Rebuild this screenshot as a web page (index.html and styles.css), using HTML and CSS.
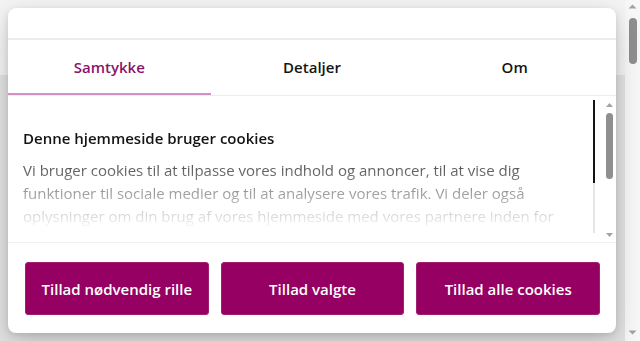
FILE: index.html
```html
<!DOCTYPE html>
<html lang="da">
<head>
<meta charset="utf-8">
<link rel="stylesheet" href="styles.css">
</head>
<body>
<div class="page">
  <div class="band-top"></div>
  <div class="band-rest"></div>
  <div class="dialog">
    <div class="dlg-header"></div>
    <nav class="tabs">
      <div class="tab active">Samtykke</div>
      <div class="tab">Detaljer</div>
      <div class="tab">Om</div>
    </nav>
    <div class="content">
      <div class="text">
        <h2 class="title">Denne hjemmeside bruger cookies</h2>
        <p class="body">Vi bruger cookies til at tilpasse vores indhold og annoncer, til at vise dig funktioner til sociale medier og til at analysere vores trafik. Vi deler også oplysninger om din brug af vores hjemmeside med vores partnere inden for sociale medier, annonceringspartnere og analysepartnere. Vores partnere kan kombinere disse data med andre oplysninger, du har givet dem, eller som de har indsamlet fra din brug af deres tjenester.</p>
      </div>
      <div class="track"><div class="track-fill"></div></div>
      <div class="sbar inner">
        <svg class="arrow" width="13" height="6" viewBox="0 0 13 6"><polygon points="3,5 10,5 6.5,1" fill="#a3a3a3"/></svg>
        <div class="thumb inner-thumb"></div>
        <div class="sb-space"></div>
        <svg class="arrow" width="13" height="6" viewBox="0 0 13 6"><polygon points="3,1 10,1 6.5,5" fill="#a3a3a3"/></svg>
      </div>
    </div>
    <div class="footer">
      <button class="btn">Tillad nødvendig rille</button>
      <button class="btn">Tillad valgte</button>
      <button class="btn">Tillad alle cookies</button>
    </div>
  </div>
</div>
<div class="sbar page-sbar">
  <svg class="arrow" width="15" height="7" viewBox="0 0 15 7"><polygon points="3.5,5.5 11.5,5.5 7.5,1.5" fill="#a3a3a3"/></svg>
  <div class="thumb page-thumb"></div>
  <div class="sb-space"></div>
  <svg class="arrow" width="15" height="7" viewBox="0 0 15 7"><polygon points="3.5,1.5 11.5,1.5 7.5,5.5" fill="#a3a3a3"/></svg>
</div>
</body>
</html>
```
FILE: styles.css
```css
html, body {
  margin: 0;
  padding: 0;
  width: 640px;
  height: 341px;
  overflow: hidden;
}
body {
  display: flex;
  font-family: "Open Sans", "Liberation Sans", sans-serif;
}
.page {
  position: relative;
  flex: 1;
  display: flex;
  flex-direction: column;
}
.band-top {
  height: 75px;
  background: #f4f4f4;
}
.band-rest {
  flex: 1;
  background: #e3e3e3;
}
.dialog {
  position: absolute;
  top: 8px;
  left: 8px;
  width: 608px;
  height: 325px;
  background: #fff;
  border-radius: 8px;
  box-shadow: 0 2px 6px rgba(0,0,0,0.12), 0 10px 30px rgba(0,0,0,0.18);
  display: flex;
  flex-direction: column;
  overflow: hidden;
}
.dlg-header {
  height: 30px;
  border-bottom: 2px solid #ececec;
  flex: none;
}
.tabs {
  display: grid;
  grid-template-columns: 1fr 1fr 1fr;
  height: 55px;
  border-bottom: 1px solid #ececec;
  flex: none;
}
.tab {
  display: flex;
  align-items: center;
  justify-content: center;
  font-size: 15px;
  font-weight: 600;
  color: #141414;
  padding-top: 1px;
  border-bottom: 2px solid transparent;
}
.tab.active {
  color: #8c136a;
  border-bottom-color: #d690c3;
}
.content {
  height: 146px;
  display: flex;
  flex: none;
  overflow: hidden;
}
.text {
  width: 585px;
  box-sizing: border-box;
  padding: 30px 5px 0 15px;
  -webkit-mask-image: linear-gradient(to bottom, #000 64px, transparent 134px);
  mask-image: linear-gradient(to bottom, #000 64px, transparent 134px);
}
.title {
  margin: 0;
  font-size: 15px;
  line-height: 24px;
  font-weight: 600;
  color: #141414;
}
.body {
  margin: 9px 0 0;
  font-size: 15px;
  line-height: 23px;
  font-weight: 400;
  color: #474747;
}
.track {
  width: 2px;
  margin: 4px 0 9px;
  background: #e6e6e6;
  display: flex;
  flex-direction: column;
}
.track-fill {
  height: 83px;
  background: #141414;
}
.sbar {
  display: flex;
  flex-direction: column;
  align-items: center;
}
.sbar.inner {
  width: 13px;
  margin-left: 8px;
  padding-top: 6px;
  padding-bottom: 4px;
  box-sizing: border-box;
}
.thumb {
  background: #8f8f8f;
  border-radius: 4px;
}
.inner-thumb {
  width: 7px;
  height: 66px;
  margin-top: 5px;
}
.sb-space {
  flex: 1;
}
.footer {
  flex: 1;
  border-top: 1px solid #f0f0f0;
  display: grid;
  grid-template-columns: 1fr 1fr 1fr;
  gap: 12px;
  padding: 19px 16px 18px 17px;
}
.btn {
  font-family: "Open Sans", "Liberation Sans", sans-serif;
  font-size: 15px;
  font-weight: 600;
  color: #fff;
  background: #960063;
  border: 1px solid #a0206f;
  border-radius: 3px;
  padding: 0;
  margin: 0;
}
.page-sbar {
  width: 15px;
  background: #f8f8f8;
  padding-top: 3px;
  padding-bottom: 5px;
  box-sizing: border-box;
}
.page-thumb {
  width: 8px;
  height: 46px;
  margin-top: 8px;
}
```
